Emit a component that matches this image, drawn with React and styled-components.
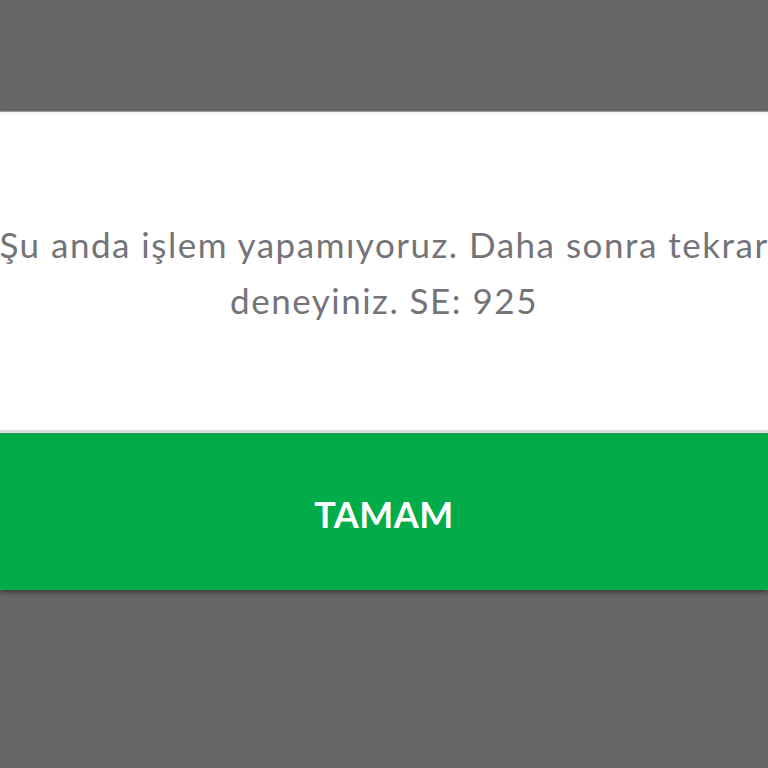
import React from 'react';
import styled, { createGlobalStyle } from 'styled-components';

const GlobalStyle = createGlobalStyle`
  html, body {
    margin: 0;
    padding: 0;
    background: #666666;
    font-family: Lato, 'Noto Sans', sans-serif;
    overflow: hidden;
  }
`;

const Screen = styled.div`
  width: 768px;
  height: 768px;
  background: #666666;
  display: flex;
  flex-direction: column;
  padding-top: 111px;
  box-sizing: border-box;
`;

const Dialog = styled.div`
  display: flex;
  flex-direction: column;
  border-top: 1px solid #9a9a9a;
  box-shadow: 0 3px 4px rgba(0, 0, 0, 0.35);
`;

const Body = styled.div`
  height: 318px;
  background: #ffffff;
  display: flex;
  flex-direction: column;
  align-items: center;
  justify-content: center;
  overflow: hidden;
  box-shadow: inset 0 4px 5px -3px rgba(0, 0, 0, 0.08);
  border-bottom: 3px solid #dcdedd;
`;

const Message = styled.p`
  margin: 0;
  padding-top: 2px;
  white-space: nowrap;
  text-align: center;
  font-size: 35px;
  letter-spacing: 1.5px;
  line-height: 56px;
  color: #747478;
  font-weight: 400;
`;

const Button = styled.button`
  height: 157px;
  border: none;
  background: #02ac48;
  color: #ffffff;
  font-family: Lato, 'Noto Sans', sans-serif;
  font-weight: 700;
  font-size: 36px;
  letter-spacing: 0.5px;
  display: flex;
  align-items: center;
  justify-content: center;
  padding: 4px 0 0;
  cursor: pointer;
  border-top: 1px solid #2e9a58;
`;

export default function App() {
  return (
    <>
      <GlobalStyle />
      <Screen>
        <Dialog>
          <Body>
            <Message>
              Şu anda işlem yapamıyoruz. Daha sonra tekrar
              <br />
              deneyiniz. SE: 925
            </Message>
          </Body>
          <Button>TAMAM</Button>
        </Dialog>
      </Screen>
    </>
  );
}
